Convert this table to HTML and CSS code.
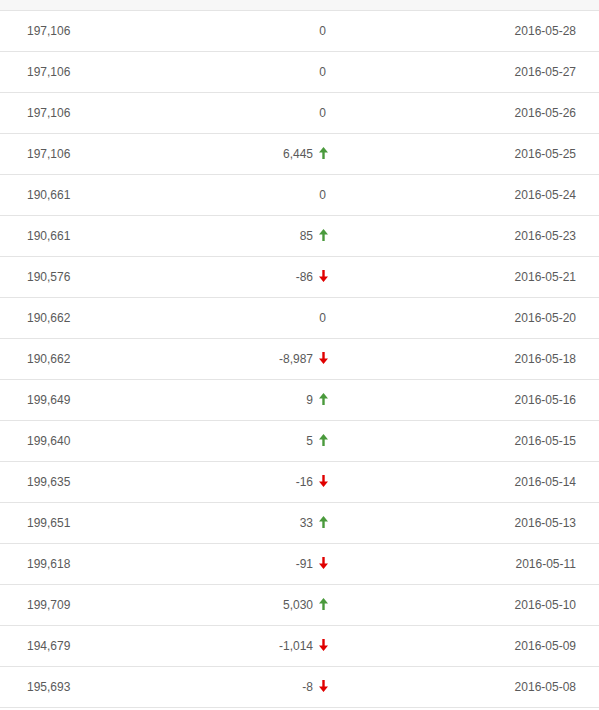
FILE: index.html
```html
<!DOCTYPE html>
<html lang="en">
<head>
    <meta charset="UTF-8">
    <title>Follower History</title>
    <link rel="stylesheet" href="styles.css">
</head>
<body>
    <div class="history">
        <div class="history-head"></div>
        <table class="history-table">
            <tbody id="historyRows"></tbody>
        </table>
    </div>

    <script>
        // total, change, date
        const rows = [
            ['197,106', 0, '2016-05-28'],
            ['197,106', 0, '2016-05-27'],
            ['197,106', 0, '2016-05-26'],
            ['197,106', 6445, '2016-05-25'],
            ['190,661', 0, '2016-05-24'],
            ['190,661', 85, '2016-05-23'],
            ['190,576', -86, '2016-05-21'],
            ['190,662', 0, '2016-05-20'],
            ['190,662', -8987, '2016-05-18'],
            ['199,649', 9, '2016-05-16'],
            ['199,640', 5, '2016-05-15'],
            ['199,635', -16, '2016-05-14'],
            ['199,651', 33, '2016-05-13'],
            ['199,618', -91, '2016-05-11'],
            ['199,709', 5030, '2016-05-10'],
            ['194,679', -1014, '2016-05-09'],
            ['195,693', -8, '2016-05-08']
        ];

        const upArrow = '<svg class="arrow up" width="9" height="12" viewBox="0 0 9 12"><path d="M4.5 0 L9 5.5 H5.7 V12 H3.3 V5.5 H0 Z"/></svg>';
        const downArrow = '<svg class="arrow down" width="9" height="12" viewBox="0 0 9 12"><path d="M4.5 12 L9 6.5 H5.7 V0 H3.3 V6.5 H0 Z"/></svg>';

        const tbody = document.getElementById('historyRows');
        rows.forEach(function(row) {
            const change = row[1];
            let changeHtml = '0';
            if (change > 0) {
                changeHtml = change.toLocaleString('en-US') + upArrow;
            } else if (change < 0) {
                changeHtml = change.toLocaleString('en-US') + downArrow;
            }
            const tr = document.createElement('tr');
            tr.innerHTML = '<td class="col-total">' + row[0] + '</td>' +
                '<td class="col-change' + (change === 0 ? ' flat' : '') + '">' + changeHtml + '</td>' +
                '<td class="col-date">' + row[2] + '</td>';
            tbody.appendChild(tr);
        });
    </script>
</body>
</html>
```

FILE: styles.css
```css
body {
    margin: 0;
    padding: 0;
    background-color: #fff;
    font-family: "Liberation Sans", Arial, sans-serif;
    font-size: 12px;
    color: #5a5a5a;
}
.history-head {
    height: 10px;
    background-color: #f7f7f7;
    border-bottom: 1px solid #e4e4e4;
}
.history-table {
    width: 599px;
    border-collapse: collapse;
}
.history-table td {
    height: 40px;
    padding: 0;
    border-bottom: 1px solid #e4e4e4;
    vertical-align: middle;
}
.col-total {
    width: 199px;
    padding-left: 27px !important;
}
.col-change {
    width: 100px;
    text-align: right;
}
.col-change.flat {
    padding-right: 2px !important;
}
.col-date {
    text-align: right;
    padding-right: 23px !important;
}
.arrow {
    margin-left: 6px;
    vertical-align: -1px;
}
.arrow.up {
    fill: #4a9a3c;
}
.arrow.down {
    fill: #e00000;
}
```
